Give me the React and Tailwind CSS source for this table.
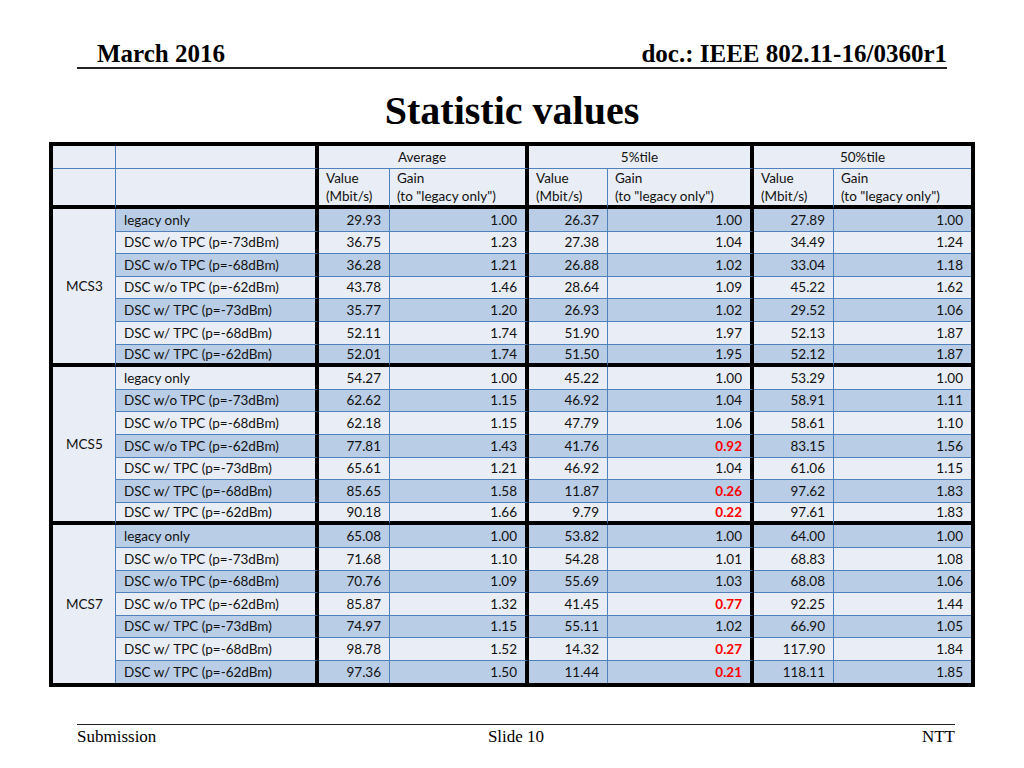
import React from "react";

const groups = [
    {
        mcs: "MCS3",
        rows: [
            ["legacy only", "29.93", "1.00", "26.37", "1.00", "27.89", "1.00"],
            ["DSC w/o TPC (p=-73dBm)", "36.75", "1.23", "27.38", "1.04", "34.49", "1.24"],
            ["DSC w/o TPC (p=-68dBm)", "36.28", "1.21", "26.88", "1.02", "33.04", "1.18"],
            ["DSC w/o TPC (p=-62dBm)", "43.78", "1.46", "28.64", "1.09", "45.22", "1.62"],
            ["DSC w/ TPC (p=-73dBm)", "35.77", "1.20", "26.93", "1.02", "29.52", "1.06"],
            ["DSC w/ TPC (p=-68dBm)", "52.11", "1.74", "51.90", "1.97", "52.13", "1.87"],
            ["DSC w/ TPC (p=-62dBm)", "52.01", "1.74", "51.50", "1.95", "52.12", "1.87"],
        ],
    },
    {
        mcs: "MCS5",
        rows: [
            ["legacy only", "54.27", "1.00", "45.22", "1.00", "53.29", "1.00"],
            ["DSC w/o TPC (p=-73dBm)", "62.62", "1.15", "46.92", "1.04", "58.91", "1.11"],
            ["DSC w/o TPC (p=-68dBm)", "62.18", "1.15", "47.79", "1.06", "58.61", "1.10"],
            ["DSC w/o TPC (p=-62dBm)", "77.81", "1.43", "41.76", "0.92", "83.15", "1.56"],
            ["DSC w/ TPC (p=-73dBm)", "65.61", "1.21", "46.92", "1.04", "61.06", "1.15"],
            ["DSC w/ TPC (p=-68dBm)", "85.65", "1.58", "11.87", "0.26", "97.62", "1.83"],
            ["DSC w/ TPC (p=-62dBm)", "90.18", "1.66", "9.79", "0.22", "97.61", "1.83"],
        ],
    },
    {
        mcs: "MCS7",
        rows: [
            ["legacy only", "65.08", "1.00", "53.82", "1.00", "64.00", "1.00"],
            ["DSC w/o TPC (p=-73dBm)", "71.68", "1.10", "54.28", "1.01", "68.83", "1.08"],
            ["DSC w/o TPC (p=-68dBm)", "70.76", "1.09", "55.69", "1.03", "68.08", "1.06"],
            ["DSC w/o TPC (p=-62dBm)", "85.87", "1.32", "41.45", "0.77", "92.25", "1.44"],
            ["DSC w/ TPC (p=-73dBm)", "74.97", "1.15", "55.11", "1.02", "66.90", "1.05"],
            ["DSC w/ TPC (p=-68dBm)", "98.78", "1.52", "14.32", "0.27", "117.90", "1.84"],
            ["DSC w/ TPC (p=-62dBm)", "97.36", "1.50", "11.44", "0.21", "118.11", "1.85"],
        ],
    },
];

// right border of each column (col 1..8)
const colRight = [
    "border-r border-r-[#4f81bd]",
    "border-r-4 border-r-black",
    "border-r border-r-[#4f81bd]",
    "border-r-4 border-r-black",
    "border-r border-r-[#4f81bd]",
    "border-r-4 border-r-black",
    "border-r border-r-[#4f81bd]",
    "",
];

const thinBottom = "border-b border-b-[#4f81bd]";
const thickBottom = "border-b-4 border-b-black";
const light = "bg-[#e9edf5]";
const dark = "bg-[#b9cde6]";

const Header = () => (
    <>
        <div className={`${light} ${colRight[0]} ${thinBottom}`} />
        <div className={`${light} ${colRight[1]} ${thinBottom}`} />
        {["Average", "5%tile", "50%tile"].map((h, i) => (
            <div
                key={h}
                className={`col-span-2 flex items-center justify-center ${light} ${thinBottom} ${i < 2 ? "border-r-4 border-r-black" : ""}`}
            >
                {h}
            </div>
        ))}
        <div className={`${light} ${colRight[0]} ${thickBottom}`} />
        <div className={`${light} ${colRight[1]} ${thickBottom}`} />
        {[0, 1, 2].map((i) => (
            <React.Fragment key={i}>
                <div className={`flex flex-col justify-center pl-[7px] leading-[18px] ${light} ${thickBottom} ${colRight[2 + i * 2]}`}>
                    <span>Value</span>
                    <span>(Mbit/s)</span>
                </div>
                <div className={`flex flex-col justify-center pl-[7px] leading-[18px] ${light} ${thickBottom} ${colRight[3 + i * 2]}`}>
                    <span>Gain</span>
                    <span>(to "legacy only")</span>
                </div>
            </React.Fragment>
        ))}
    </>
);

const StatTable = () => {
    let n = 0;
    return (
        <div className="ml-[49px] mt-[11px] w-[926px] border-4 border-black font-['Lato',sans-serif] text-[13.5px] text-[#111]">
            <div className="grid grid-cols-[63px_203px_71px_139px_79px_146px_80px_137px] grid-rows-[23px_40px_repeat(21,22.6px)]">
                <Header />
                {groups.map((g, gi) => (
                    <React.Fragment key={g.mcs}>
                        <div
                            className={`row-span-7 flex items-center pl-[13px] ${light} ${colRight[0]} ${gi < 2 ? thickBottom : ""}`}
                        >
                            {g.mcs}
                        </div>
                        {g.rows.map((r, ri) => {
                            const bg = n++ % 2 === 0 ? dark : light;
                            const last = ri === g.rows.length - 1;
                            const bottom = last ? (gi < 2 ? thickBottom : "") : thinBottom;
                            return r.map((cell, ci) => {
                                const red = ci === 4 && parseFloat(cell) < 1;
                                return (
                                    <div
                                        key={`${ri}-${ci}`}
                                        className={`flex items-center whitespace-nowrap ${bg} ${bottom} ${colRight[ci + 1]} ${ci === 0 ? "pl-2" : "justify-end pr-2"} ${red ? "font-bold text-[#ff0000]" : ""}`}
                                    >
                                        {cell}
                                    </div>
                                );
                            });
                        })}
                    </React.Fragment>
                ))}
            </div>
        </div>
    );
};

export default function App() {
    return (
        <div className="w-[1024px] h-[768px] bg-white font-['Liberation_Serif',serif] text-black overflow-hidden">
            <div className="ml-[77px] w-[870px] h-[69px] border-b-2 border-[#222] flex items-end justify-between pl-[20px] pb-[1px] text-[25px] leading-none font-bold">
                <span>March 2016</span>
                <span>doc.: IEEE 802.11-16/0360r1</span>
            </div>
            <h1 className="mt-[22px] text-center text-[40px] leading-none font-bold">Statistic values</h1>
            <StatTable />
            <div className="ml-[77px] w-[878px] mt-[37px] border-t border-[#222] grid grid-cols-3 pt-[3px] text-[17px] leading-none">
                <span>Submission</span>
                <span className="text-center">Slide 10</span>
                <span className="text-right">NTT</span>
            </div>
        </div>
    );
}
